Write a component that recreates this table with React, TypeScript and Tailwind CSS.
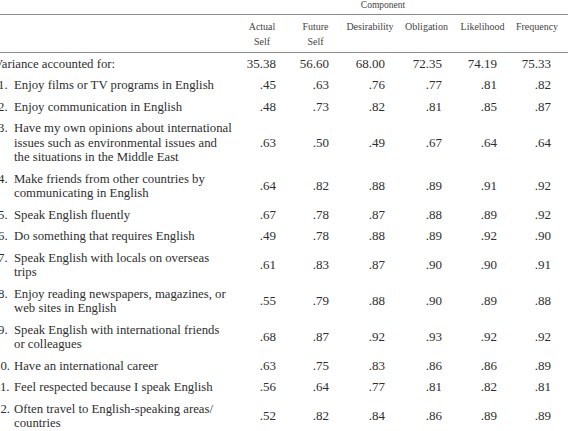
import React from "react";

type Row = { n: string; label: string[]; v: string[] };

const rows: Row[] = [
  { n: "", label: ["Variance accounted for:"], v: ["35.38", "56.60", "68.00", "72.35", "74.19", "75.33"] },
  { n: "1.", label: ["Enjoy films or TV programs in English"], v: [".45", ".63", ".76", ".77", ".81", ".82"] },
  { n: "2.", label: ["Enjoy communication in English"], v: [".48", ".73", ".82", ".81", ".85", ".87"] },
  {
    n: "3.",
    label: [
      "Have my own opinions about international",
      "issues such as environmental issues and",
      "the situations in the Middle East",
    ],
    v: [".63", ".50", ".49", ".67", ".64", ".64"],
  },
  { n: "4.", label: ["Make friends from other countries by", "communicating in English"], v: [".64", ".82", ".88", ".89", ".91", ".92"] },
  { n: "5.", label: ["Speak English fluently"], v: [".67", ".78", ".87", ".88", ".89", ".92"] },
  { n: "6.", label: ["Do something that requires English"], v: [".49", ".78", ".88", ".89", ".92", ".90"] },
  { n: "7.", label: ["Speak English with locals on overseas", "trips"], v: [".61", ".83", ".87", ".90", ".90", ".91"] },
  { n: "8.", label: ["Enjoy reading newspapers, magazines, or", "web sites in English"], v: [".55", ".79", ".88", ".90", ".89", ".88"] },
  { n: "9.", label: ["Speak English with international friends", "or colleagues"], v: [".68", ".87", ".92", ".93", ".92", ".92"] },
  { n: "10.", label: ["Have an international career"], v: [".63", ".75", ".83", ".86", ".86", ".89"] },
  { n: "11.", label: ["Feel respected because I speak English"], v: [".56", ".64", ".77", ".81", ".82", ".81"] },
  { n: "12.", label: ["Often travel to English-speaking areas/", "countries"], v: [".52", ".82", ".84", ".86", ".89", ".89"] },
];

const widths = ["w-[54px]", "w-[53px]", "w-[56px]", "w-[57px]", "w-[55px]", "w-[54px]"];
const headers: string[][] = [["Actual", "Self"], ["Future", "Self"], ["Desirability"], ["Obligation"], ["Likelihood"], ["Frequency"]];

export default function App() {
  return (
    <div className="w-[568px] h-[431px] overflow-hidden bg-white text-[#2e2e2e] font-['Liberation_Serif','Times_New_Roman',serif]">
      <div className="ml-[-6px] w-[574px]">
        {/* Spanner */}
        <div className="flex h-[14px]">
          <div className="w-[241px] shrink-0" />
          <div className="w-[296px] text-center text-[9.5px] leading-[11px] text-[#444]">Component</div>
        </div>
        {/* Column headers */}
        <div className="flex border-t border-b border-[#8c8c8c] pt-[3.5px] pb-[3.5px]">
          <div className="w-[241px] shrink-0" />
          {headers.map((h, i) => (
            <div key={i} className={`${widths[i]} shrink-0 text-center text-[10px] leading-[15px] text-[#444] whitespace-nowrap`}>
              {h.map((l, j) => (
                <div key={j}>{l}</div>
              ))}
            </div>
          ))}
        </div>
        {/* Body */}
        {rows.map((r, ri) => (
          <div key={ri} className="flex py-[3.5px]">
            <div className="w-[241px] shrink-0 flex text-[12.75px] leading-[14.5px]">
              {r.n !== "" && (
                <span className={`w-[20px] shrink-0 whitespace-nowrap ${r.n.length === 2 ? "pl-[4px]" : "pl-0"}`}>{r.n}</span>
              )}
              <div className="whitespace-nowrap">
                {r.label.map((l, li) => (
                  <div key={li}>{l}</div>
                ))}
              </div>
            </div>
            {r.v.map((v, vi) => (
              <div key={vi} className={`${widths[vi]} shrink-0 flex items-center justify-end pr-[13px] text-[13px] leading-[14.5px]`}>
                {v}
              </div>
            ))}
          </div>
        ))}
      </div>
    </div>
  );
}
